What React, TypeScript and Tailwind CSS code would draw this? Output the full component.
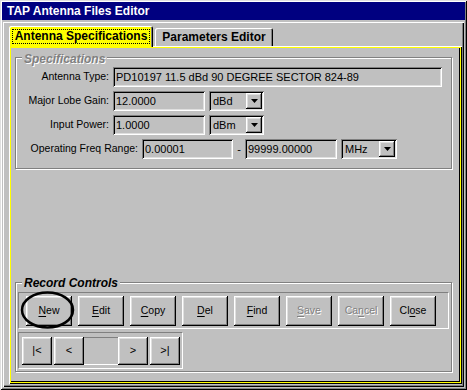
import React from "react";

const raised =
  "shadow-[inset_-1px_-1px_#000,inset_1px_1px_#fff,inset_-2px_-2px_#808080,inset_2px_2px_#dfdfdf]";
const sunken =
  "shadow-[inset_1px_1px_#808080,inset_-1px_-1px_#fff,inset_2px_2px_#000,inset_-2px_-2px_#dfdfdf]";
const etched = "border border-[#808080] shadow-[inset_1px_1px_#fff,1px_1px_#fff]";

const Field = ({ value, w }: { value: string; w: string }) => (
  <div className={`${w} h-[20px] ${sunken} bg-[#c0c0c0] flex items-center pl-[3px] text-[11px] text-black whitespace-nowrap overflow-hidden`}>
    {value}
  </div>
);

const Select = ({ value, w }: { value: string; w: string }) => (
  <div className={`${w} h-[20px] ${sunken} bg-[#c0c0c0] flex items-center justify-between pl-[4px] pr-[2px] text-[11px] text-black`}>
    <span>{value}</span>
    <div className={`w-[16px] h-[16px] ${raised} bg-[#c0c0c0] flex items-center justify-center`}>
      <svg width="7" height="4" viewBox="0 0 7 4">
        <path d="M0 0h7L3.5 4z" fill="#000" />
      </svg>
    </div>
  </div>
);

// label with one underlined access key
const Btn = ({ pre, key1, post, disabled }: { pre: string; key1: string; post: string; disabled?: boolean }) => (
  <div
    className={`w-[46px] h-[30px] ${raised} bg-[#c0c0c0] flex items-center justify-center text-[10.5px] ${
      disabled ? "text-[#808080] [text-shadow:1px_1px_#fff]" : "text-black"
    }`}
  >
    <span>
      {pre}
      <span className="underline underline-offset-2">{key1}</span>
      {post}
    </span>
  </div>
);

const NavBtn = ({ label }: { label: string }) => (
  <div className={`w-[30px] h-[28px] ${raised} bg-[#c0c0c0] flex items-center justify-center text-[11px] text-black`}>
    {label}
  </div>
);

const App = () => {
  return (
    <div className="w-[467px] h-[390px] bg-[#c0c0c0] font-['Liberation_Sans',Arial,sans-serif] relative overflow-hidden">
      <div className="w-full h-full p-[2px] flex flex-col shadow-[inset_1px_1px_#dfdfdf,inset_-1px_-1px_#000,inset_2px_2px_#fff,inset_-2px_-2px_#808080]">
        {/* title bar */}
        <div className="h-[18px] bg-[#000080] text-white font-bold text-[12px] pl-[5px] flex items-center shrink-0">
          TAP Antenna Files Editor
        </div>

        {/* body */}
        <div className="flex-1 mt-[2px] mx-[1px] mb-[1px] pt-[4px] pl-[6px] pr-[2px] pb-[3px] flex flex-col shadow-[inset_1px_1px_#fff,inset_-1px_-1px_#000,inset_-2px_-2px_#808080]">
          {/* tabs */}
          <div className="flex items-end h-[20px] relative z-10">
            <div className="w-[144px] h-[21px] bg-[#ffff00] rounded-t-[2px] shadow-[inset_1px_1px_#fff,inset_-1px_0_#000,inset_-2px_0_#808080] flex items-center justify-center mb-[-1px]">
              <span className="border border-dotted border-black px-[2px] leading-[13px] text-[12px] font-bold text-black">
                Antenna Specifications
              </span>
            </div>
            <div className="w-[118px] h-[18px] ml-[2px] bg-[#c0c0c0] rounded-t-[2px] shadow-[inset_1px_1px_#fff,inset_-1px_0_#000,inset_-2px_0_#808080] flex items-center justify-center text-[12px] font-bold text-black">
              Parameters Editor
            </div>
          </div>

          {/* tab panel */}
          <div className="flex-1 flex flex-col pt-[11px] pl-[6px] pr-[10px] shadow-[inset_1px_1px_#fff,inset_-1px_-1px_#000,inset_2px_2px_#ff0,inset_-2px_-2px_#ff0,inset_-3px_-3px_#000]">
            {/* Specifications */}
            <div className={`relative h-[112px] ${etched} pt-[9px] flex flex-col gap-[4px]`}>
              <span className="absolute -top-[6px] left-[6px] px-[2px] bg-[#c0c0c0] text-[12px] font-bold italic text-[#808080] [text-shadow:1px_1px_#fff] leading-[14px]">
                Specifications
              </span>
              <div className="flex items-center">
                <span className="w-[93px] text-right text-[10.5px] text-black">Antenna Type:</span>
                <div className="ml-[4px]">
                  <Field value="PD10197 11.5 dBd 90 DEGREE SECTOR 824-89" w="w-[329px]" />
                </div>
              </div>
              <div className="flex items-center">
                <span className="w-[93px] text-right text-[10.5px] text-black">Major Lobe Gain:</span>
                <div className="ml-[4px] flex gap-[4px]">
                  <Field value="12.0000" w="w-[92px]" />
                  <Select value="dBd" w="w-[55px]" />
                </div>
              </div>
              <div className="flex items-center">
                <span className="w-[93px] text-right text-[10.5px] text-black">Input Power:</span>
                <div className="ml-[4px] flex gap-[4px]">
                  <Field value="1.0000" w="w-[92px]" />
                  <Select value="dBm" w="w-[55px]" />
                </div>
              </div>
              <div className="flex items-center">
                <span className="w-[122px] text-right text-[10.5px] text-black">Operating Freq Range:</span>
                <div className="ml-[4px] flex items-center">
                  <Field value="0.00001" w="w-[91px]" />
                  <span className="w-[12px] text-center text-[11px] text-black">-</span>
                  <Field value="99999.00000" w="w-[92px]" />
                  <div className="ml-[4px]">
                    <Select value="MHz" w="w-[56px]" />
                  </div>
                </div>
              </div>
            </div>

            <div className="flex-1" />

            {/* Record Controls */}
            <div className={`relative h-[90px] mb-[12px] ${etched} pt-[9px] pl-[2px] pr-[2px] flex flex-col gap-[3px]`}>
              <span className="absolute -top-[7px] left-[6px] px-[2px] bg-[#c0c0c0] text-[12px] font-bold italic text-black leading-[14px]">
                Record Controls
              </span>
              <div className="h-[37px] border border-t-[#808080] border-l-[#808080] border-b-white border-r-white flex items-center gap-[6px] pl-[7px]">
                <Btn pre="" key1="N" post="ew" />
                <Btn pre="" key1="E" post="dit" />
                <Btn pre="" key1="C" post="opy" />
                <Btn pre="" key1="D" post="el" />
                <Btn pre="" key1="F" post="ind" />
                <Btn pre="" key1="S" post="ave" disabled />
                <Btn pre="Ca" key1="n" post="cel" disabled />
                <Btn pre="Cl" key1="o" post="se" />
              </div>
              <div className="w-[165px] h-[37px] border border-t-[#808080] border-l-[#808080] border-b-white border-r-white flex items-center pl-[3px]">
                <NavBtn label="|<" />
                <div className="ml-[2px]">
                  <NavBtn label="<" />
                </div>
                <div className="w-[34px] h-[28px] border-t border-t-[#808080] border-b border-b-white" />
                <NavBtn label=">" />
                <div className="ml-[2px]">
                  <NavBtn label=">|" />
                </div>
              </div>
            </div>
          </div>
        </div>
      </div>

      {/* hand-drawn circle around New */}
      <svg className="absolute left-[20px] top-[290px]" width="56" height="40" viewBox="0 0 56 40">
        <ellipse cx="27.5" cy="20" rx="25.5" ry="17.5" fill="none" stroke="#000" strokeWidth="2.5" />
      </svg>
    </div>
  );
};

export default App;
